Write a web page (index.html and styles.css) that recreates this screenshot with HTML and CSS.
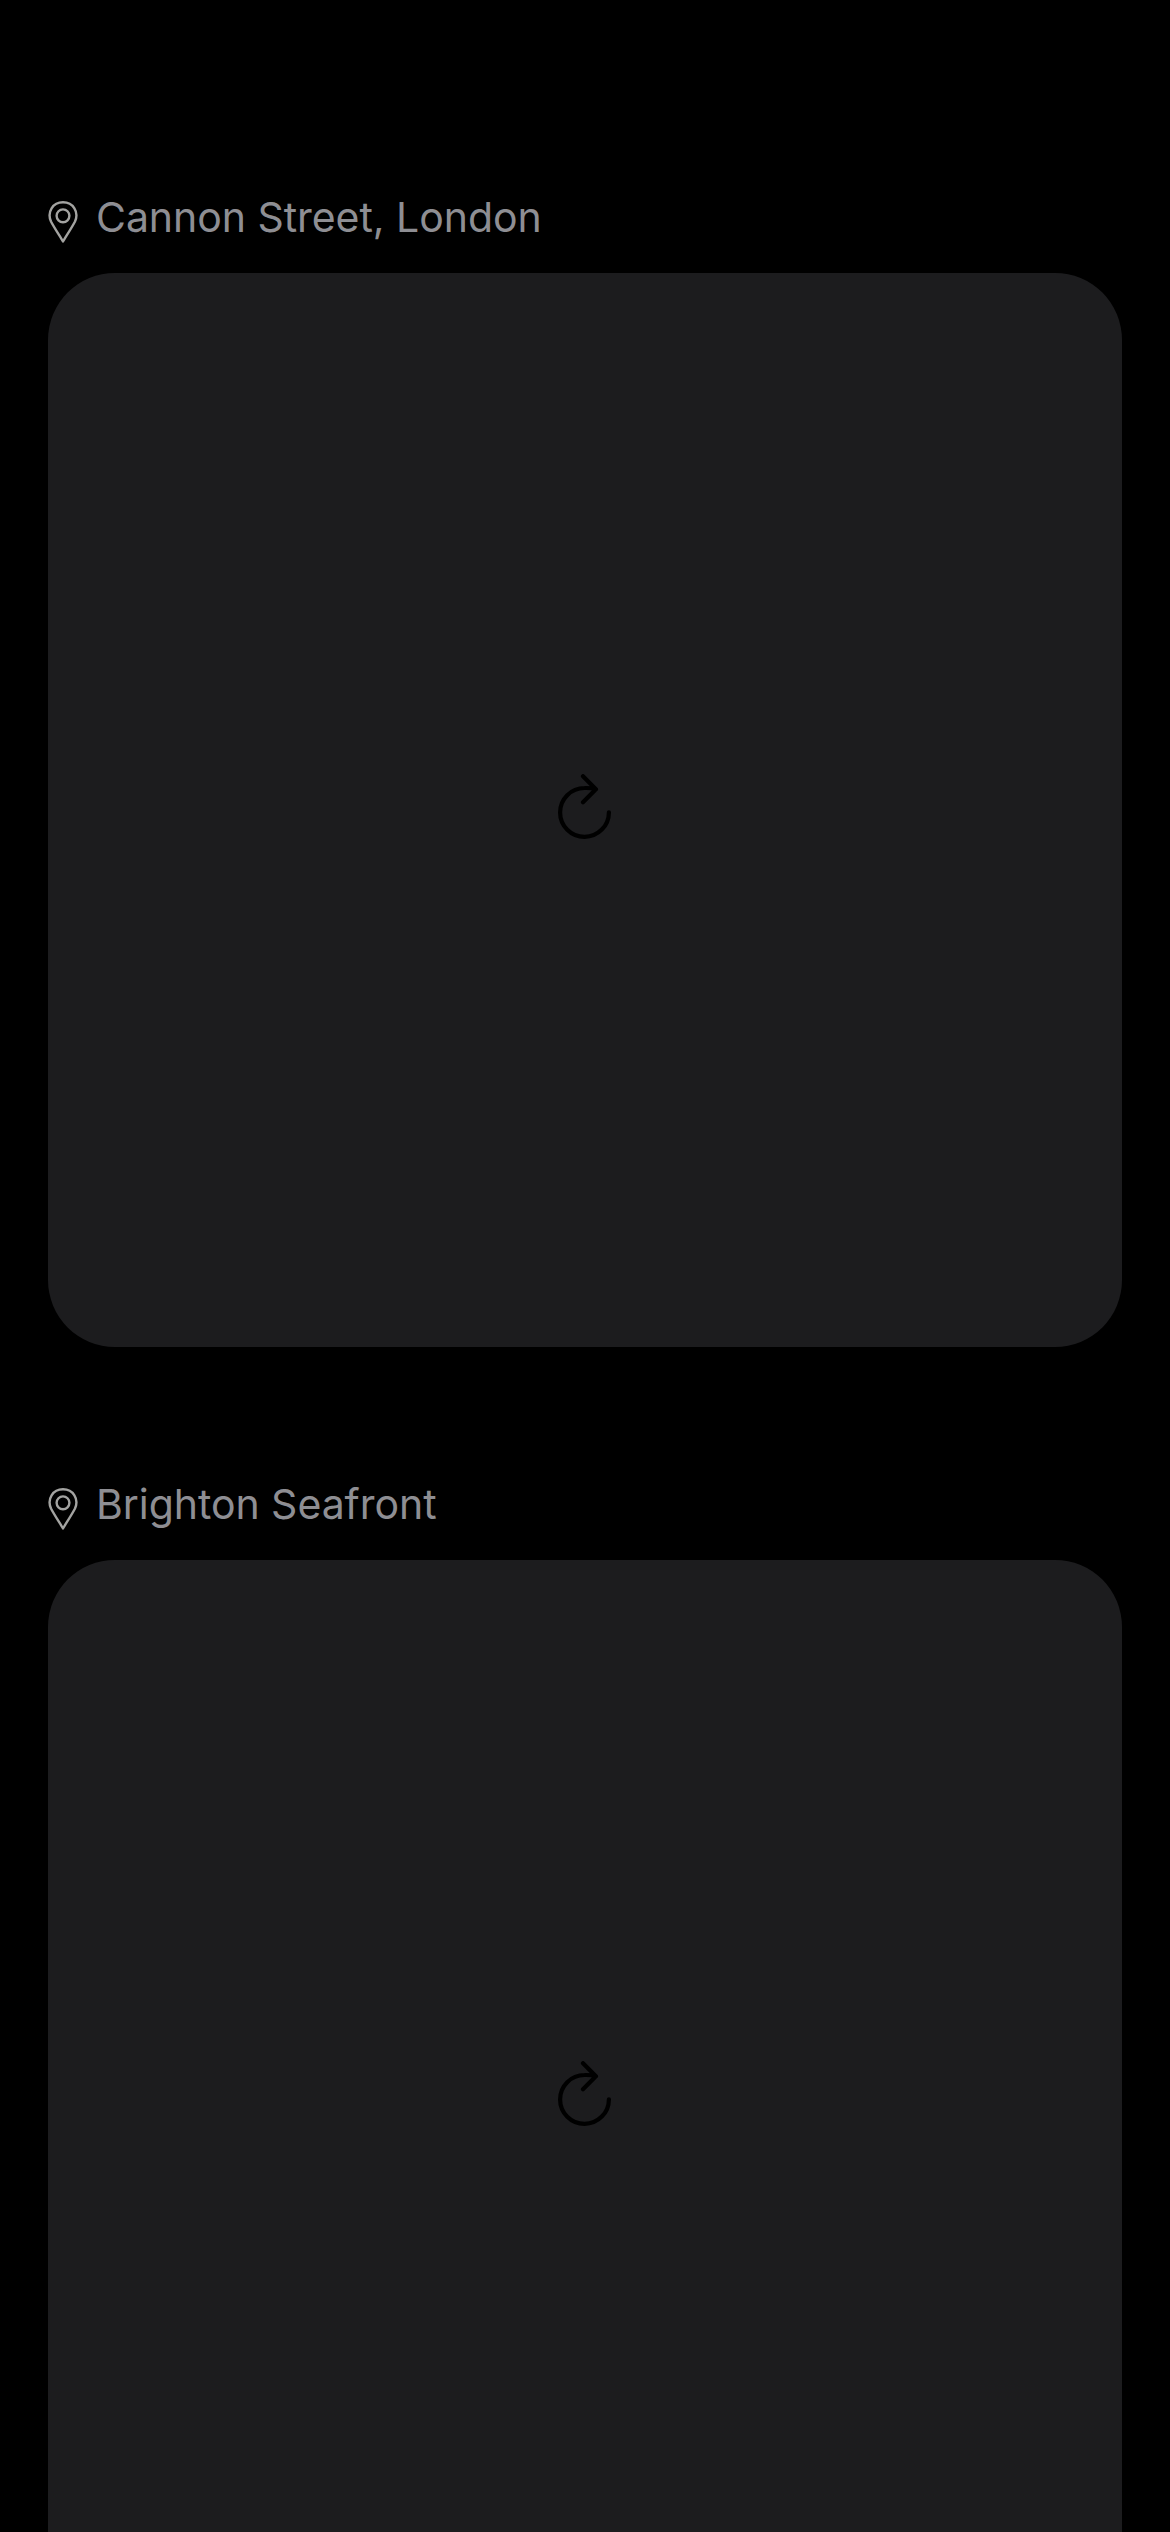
FILE: index.html
```html
<!DOCTYPE html>
<html lang="en">
<head>
<meta charset="utf-8">
<title>Locations</title>
<link rel="stylesheet" href="styles.css">
</head>
<body>
<main class="feed">
  <section class="place">
    <header class="place-header">
      <svg class="pin" viewBox="0 0 30 42" aria-hidden="true"><path d="M15 40.5C13 37 5.5 25.5 3 20.5C-1.2 11 4.8 1.3 15 1.3S31.2 11 27 20.5C24.5 25.5 17 37 15 40.5Z"/><circle cx="15" cy="14.8" r="6.4"/></svg>
      <h2 class="place-name">Cannon Street, London</h2>
    </header>
    <div class="card">
      <svg class="reload" viewBox="0 0 54 66" aria-hidden="true"><path d="M50.9 38.3A24.4 24.4 0 1 1 26.5 14Q33 13.8 38 15.2M25 2.2L37.9 15.2L25 28.3"/></svg>
    </div>
  </section>
  <section class="place">
    <header class="place-header">
      <svg class="pin" viewBox="0 0 30 42" aria-hidden="true"><path d="M15 40.5C13 37 5.5 25.5 3 20.5C-1.2 11 4.8 1.3 15 1.3S31.2 11 27 20.5C24.5 25.5 17 37 15 40.5Z"/><circle cx="15" cy="14.8" r="6.4"/></svg>
      <h2 class="place-name">Brighton Seafront</h2>
    </header>
    <div class="card">
      <svg class="reload" viewBox="0 0 54 66" aria-hidden="true"><path d="M50.9 38.3A24.4 24.4 0 1 1 26.5 14Q33 13.8 38 15.2M25 2.2L37.9 15.2L25 28.3"/></svg>
    </div>
  </section>
</main>
</body>
</html>
```
FILE: styles.css
```css
* {
  box-sizing: border-box;
}

body {
  margin: 0;
  background: #000;
  font-family: Inter, "Liberation Sans", sans-serif;
}

.feed {
  height: 2532px;
  padding: 192px 48px 0;
  overflow: hidden;
  display: flex;
  flex-direction: column;
  gap: 132px;
}

.place {
  flex: none;
}

.place-header {
  display: flex;
  align-items: flex-start;
  gap: 18px;
  height: 81px;
}

.pin {
  width: 30px;
  height: 42px;
  margin-top: 9px;
  fill: none;
  stroke: #a3a3a1;
  stroke-width: 2.4;
  stroke-linejoin: round;
}

.place-name {
  margin: 0;
  color: #8e8e93;
  font-size: 41px;
  font-weight: 400;
  line-height: 50px;
  letter-spacing: -0.05px;
  white-space: nowrap;
}

.card {
  display: flex;
  align-items: center;
  justify-content: center;
  height: 1074px;
  border-radius: 67px;
  background: #1c1c1e;
}

.reload {
  width: 54px;
  height: 66px;
  margin-bottom: 6px;
  fill: none;
  stroke: #000;
  stroke-width: 4.2;
  stroke-linecap: round;
  stroke-linejoin: round;
}
```
